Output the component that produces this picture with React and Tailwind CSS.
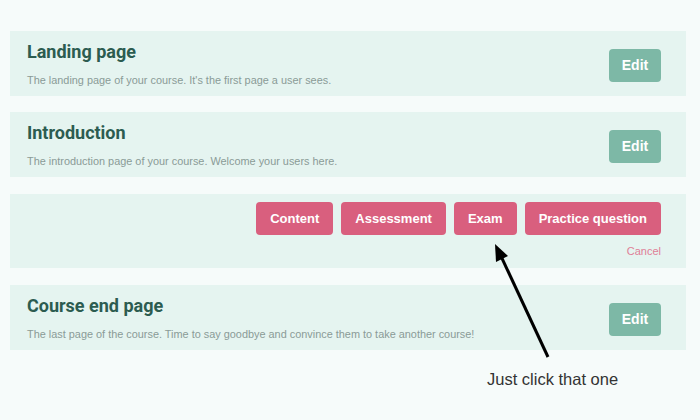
const pages = [
  { title: 'Landing page', desc: "The landing page of your course. It's the first page a user sees." },
  { title: 'Introduction', desc: 'The introduction page of your course. Welcome your users here.' },
]

const kinds = ['Content', 'Assessment', 'Exam', 'Practice question']

function PageCard({ title, desc }) {
  return (
    <div className="flex items-center justify-between bg-[#e5f4f0] h-[65px] pl-[17px] pr-[25px]">
      <div className="flex flex-col">
        <h2 className="font-['Roboto',sans-serif] font-bold text-[18px] leading-[22px] text-[#2c5c50]">{title}</h2>
        <p className="mt-[11px] font-['Liberation_Sans',Arial,sans-serif] text-[10.9px] leading-[13px] text-[#8a9b97]">{desc}</p>
      </div>
      <button className="mt-[4px] w-[52px] h-[33px] rounded-[4px] bg-[#7db8a6] text-white font-bold text-[14px] font-['Liberation_Sans',Arial,sans-serif]">
        Edit
      </button>
    </div>
  )
}

export default function App() {
  return (
    <div className="relative w-[700px] h-[420px] bg-[#f6fbfa] pt-[31px] pl-[10px] pr-[14px]">
      <div className="flex flex-col gap-[16px]">
        {pages.map((p) => (
          <PageCard key={p.title} {...p} />
        ))}
        <div className="flex flex-col items-end bg-[#e5f4f0] h-[74px] pt-[8px] pr-[25px] mt-px">
          <div className="flex gap-[8px]">
            {kinds.map((k) => (
              <button
                key={k}
                className="h-[33px] px-[14px] rounded-[4px] bg-[#d95f7e] text-white font-bold text-[13px] font-['Liberation_Sans',Arial,sans-serif]"
              >
                {k}
              </button>
            ))}
          </div>
          <span className="mt-[10px] text-[11px] leading-[13px] text-[#e07e97] font-['Liberation_Sans',Arial,sans-serif]">Cancel</span>
        </div>
        <div className="mt-px">
          <PageCard
            title="Course end page"
            desc="The last page of the course. Time to say goodbye and convince them to take another course!"
          />
        </div>
      </div>
      <p className="mt-[20px] ml-[477px] text-[16.5px] leading-[19px] text-[#333] font-['Liberation_Sans',Arial,sans-serif]">
        Just click that one
      </p>
      <svg className="absolute left-0 top-0" width="700" height="420" viewBox="0 0 700 420">
        <line x1="548" y1="357" x2="500" y2="254" stroke="#000" strokeWidth="3" />
        <polygon points="495,244 496,262 508,256" fill="#000" />
      </svg>
    </div>
  )
}
